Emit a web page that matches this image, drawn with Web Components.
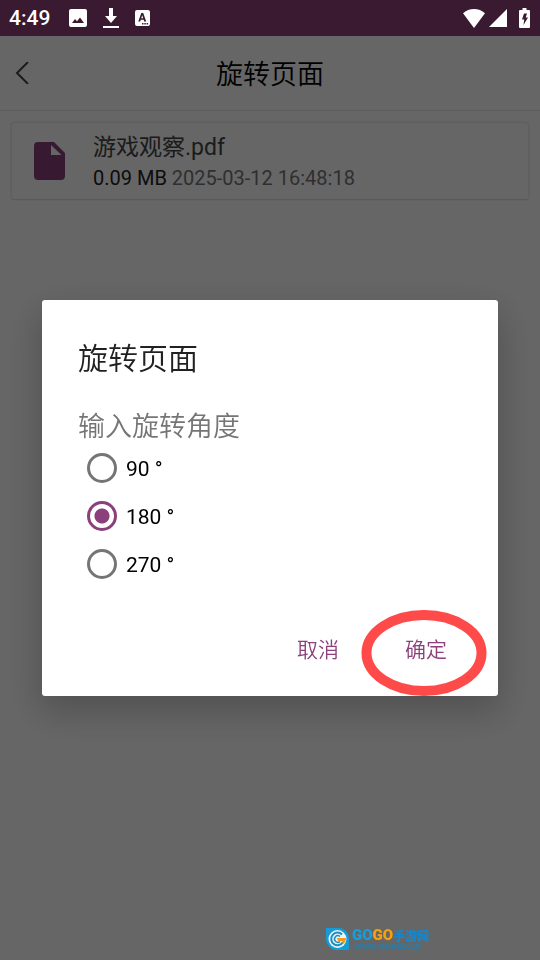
<!DOCTYPE html>
<html lang="zh-CN">
<head>
<meta charset="utf-8">
<meta name="viewport" content="width=device-width, initial-scale=1">
<title>旋转页面</title>
<style>
  html, body { margin: 0; min-height: 100%; }
  body {
    --accent: #8b3f7b;
    font-family: Roboto, "Noto Sans CJK SC", sans-serif;
    background: #fff; color: #000;
  }
</style>
</head>
<body>
<rotate-app>
  <status-bar></status-bar>
  <app-header>旋转页面</app-header>
  <file-card>
    <span slot="name">游戏观察.pdf</span>
    <span slot="size">0.09 MB</span>
    <span slot="date">2025-03-12 16:48:18</span>
  </file-card>
  <modal-dialog slot="overlay">
    <span slot="title">旋转页面</span>
    <angle-picker legend="输入旋转角度" angles="90,180,270" selected="180"></angle-picker>
    <dialog-button slot="actions">取消</dialog-button>
    <dialog-button slot="actions" highlighted>确定</dialog-button>
  </modal-dialog>
  <site-mark slot="mark"></site-mark>
</rotate-app>
<script>
class Base extends HTMLElement {
  connectedCallback() {
    if (!this.shadowRoot) this.attachShadow({ mode: 'open' }).innerHTML = this.view();
  }
}

customElements.define('rotate-app', class extends Base {
  view() { return `
    <style>
      :host { display: flex; flex-direction: column; min-height: 100vh; }
      .mark { position: fixed; left: 50%; bottom: 9px; margin-left: 55px; z-index: 3; }
    </style>
    <slot></slot><slot name="overlay"></slot>
    <div class="mark"><slot name="mark"></slot></div>`; }
});

customElements.define('status-bar', class extends Base {
  view() { return `
    <style>
      :host { display: flex; align-items: center; justify-content: space-between; height: 36px;
        padding: 0 10px 0 9px; background: #3a1a30; color: #fff; position: relative; z-index: 3; }
      div { display: flex; align-items: center; }
      time { font: 500 21px/36px Roboto, sans-serif; margin-right: 19px; }
      .left svg + svg { margin-left: 16px; }
      svg { display: block; fill: #fff; }
      .right { gap: 4px; }
      .right svg:last-child { margin-left: 8px; }
    </style>
    <div class="left">
      <time>4:49</time>
      <svg width="18" height="18" viewBox="0 0 18 18"><path fill-rule="evenodd" d="M2 0h14a2 2 0 0 1 2 2v14a2 2 0 0 1-2 2H2a2 2 0 0 1-2-2V2a2 2 0 0 1 2-2zM3 14h12l-4-5.500-3 3.800-2-2.300z"/></svg>
      <svg width="16" height="20" viewBox="0 0 16 20"><path d="M6 0h4v8h4l-6 7-6-7h4zM0 18h16v2H0z"/></svg>
      <svg width="15" height="16" viewBox="0 0 15 16"><path fill-rule="evenodd" d="M2 0h11a2 2 0 0 1 2 2v12a2 2 0 0 1-2 2H2a2 2 0 0 1-2-2V2a2 2 0 0 1 2-2zM6.300 3h1.900l3 8.500H9.200l-.5-1.700H5.700l-.5 1.700H3.300zM7.200 5.200l-1 3.100h2zM7 13h1.500v1.500H7zM9.300 13h1.500v1.500H9.300zM11.600 13h1.500v1.500h-1.500z"/></svg>
    </div>
    <div class="right">
      <svg width="22" height="19" viewBox="0 0 22 19"><path d="M11 19 0 4.200C3 1.500 7 0 11 0s8 1.500 11 4.200z"/></svg>
      <svg width="18" height="18" viewBox="0 0 18 18"><path d="M18 0v18H0z"/></svg>
      <svg width="11" height="20" viewBox="0 0 11 20"><path fill-rule="evenodd" d="M3.500 0h4v2H10a1 1 0 0 1 1 1v16a1 1 0 0 1-1 1H1a1 1 0 0 1-1-1V3a1 1 0 0 1 1-1h2.500zM5 5.500h3L6.700 9.500H9L4.500 17l.7-5.500H3z"/></svg>
    </div>`; }
});

customElements.define('app-header', class extends Base {
  view() { return `
    <style>
      :host { display: grid; grid-template-columns: 48px 1fr 48px; align-items: center; height: 74px; border-bottom: 1px solid #e8e8e8; }
      button { background: none; border: 0; padding: 0 0 0 15px; height: 48px; display: flex; align-items: center; }
      svg { fill: none; stroke: #444; stroke-width: 2; }
      h1 { margin: 0; padding-top: 4px; font-size: 27px; line-height: 40px; font-weight: 350; text-align: center; }
    </style>
    <button type="button" aria-label="返回"><svg width="14" height="22" viewBox="0 0 14 22"><path d="M13 0 2 11l11 11"/></svg></button>
    <h1><slot></slot></h1>`; }
});

customElements.define('file-card', class extends Base {
  view() { return `
    <style>
      :host { display: flex; align-items: center; gap: 28px; margin: 11px; padding: 8px 22px; height: 60px;
        border-radius: 4px; border: 1px solid #ededed; border-bottom-color: #dedede; box-shadow: 0 0 2px #0002; }
      svg { display: block; flex: none; fill: var(--accent); }
      .name { font-size: 23px; line-height: 34px; color: #444; }
      .meta { font-size: 20px; line-height: 26px; color: #777; }
      .size { color: #222; }
    </style>
    <svg width="31" height="38" viewBox="0 0 31 38"><path fill-rule="evenodd" d="M4 0h16l11 11v23a4 4 0 0 1-4 4H4a4 4 0 0 1-4-4V4a4 4 0 0 1 4-4zM17 3v10h10.500z"/></svg>
    <div>
      <div class="name"><slot name="name"></slot></div>
      <div class="meta"><span class="size"><slot name="size"></slot></span> <slot name="date"></slot></div>
    </div>`; }
});

customElements.define('modal-dialog', class extends Base {
  view() { return `
    <style>
      :host { position: fixed; inset: 0; z-index: 2; display: flex; align-items: center; padding: 36px 42px 0; background: rgba(0,0,0,.6); }
      section { flex: 1; background: #fff; border-radius: 3px; box-shadow: 0 14px 36px 2px rgba(0,0,0,.22); }
      .body { padding: 37px 36px 0; }
      h2 { margin: 0 0 29px; font-size: 30px; line-height: 44px; font-weight: 350; color: #212121; }
      footer { display: flex; justify-content: flex-end; gap: 12px; padding: 36px 24px 24px; }
    </style>
    <section role="dialog" aria-modal="true" aria-labelledby="t">
      <div class="body"><h2 id="t"><slot name="title"></slot></h2><slot></slot></div>
      <footer><slot name="actions"></slot></footer>
    </section>`; }
});

customElements.define('angle-picker', class extends Base {
  view() {
    const rows = this.getAttribute('angles').split(',').map(a => `
      <label for="a${a}"><input type="radio" name="angle" id="a${a}" value="${a}" ${a === this.getAttribute('selected') ? 'checked' : ''}><span>${a} °</span></label>`).join('');
    return `
    <style>
      :host { display: block; }
      fieldset { border: 0; margin: 0; padding: 0; }
      legend { padding: 0; font-size: 27px; line-height: 34px; font-weight: 350; color: #757575; }
      label { display: flex; align-items: center; gap: 9px; height: 48px; padding-left: 9px; font-size: 21px; color: #000; }
      span { padding-top: 2px; }
      input { appearance: none; box-sizing: border-box; margin: 0; width: 30px; height: 30px; border: 3px solid #757575; border-radius: 50%; }
      input:checked { border-color: var(--accent); background: radial-gradient(circle, var(--accent) 7px, transparent 8px); }
    </style>
    <fieldset><legend>${this.getAttribute('legend')}</legend>${rows}</fieldset>`;
  }
});

customElements.define('dialog-button', class extends Base {
  view() { return `
    <style>
      :host { display: block; position: relative; }
      button { border: 0; background: none; height: 48px; padding: 0 27px; font: inherit; font-size: 21px; font-weight: 350; color: var(--accent); }
      svg { position: absolute; left: 50%; top: 50%; margin: -39px 0 0 -65px; pointer-events: none; }
    </style>
    <button type="button"><slot></slot></button>
    ${this.hasAttribute('highlighted') ? '<svg width="126" height="88" viewBox="0 0 126 88" aria-hidden="true"><ellipse cx="63" cy="44" rx="57.500" ry="38" fill="none" stroke="#ff4a4a" stroke-width="10"/></svg>' : ''}`; }
});

customElements.define('site-mark', class extends Base {
  view() { return `
    <style>
      :host { display: flex; align-items: center; gap: 2px; }
      svg { display: block; }
      .row { display: flex; align-items: center; height: 17px; font: 900 15px/17px Roboto, sans-serif; }
      .blue { color: #12a0e0; } .gold { color: #f7a10a; }
      .cn { font: 900 12px/17px "Noto Sans CJK SC", sans-serif; color: #1288d0; }
      small { display: block; font: 700 7px/7px "DejaVu Sans", sans-serif; color: #2f7ba3; padding-left: 2px; }
    </style>
    <svg width="25" height="24" viewBox="0 0 25 24">
      <path d="M1 1h13a10 10 0 0 1 10 10v12H12A11 11 0 0 1 1 12z" fill="#169bd7"/>
      <circle cx="12.500" cy="12" r="9" fill="#e9f5fb"/>
      <path d="M17 7.500A6.300 6.300 0 1 0 18 15" fill="none" stroke="#238ebd" stroke-width="2"/>
      <path d="M15 9.500a3.300 3.300 0 1 0 0 5" fill="none" stroke="#238ebd" stroke-width="1.500"/>
      <path d="M12 11h9c0 3-1 5-3 6l-1-3h-4z" fill="#f59a16"/>
    </svg>
    <div><div class="row"><span class="blue">GO</span><span class="gold">GO</span><span class="cn">手游网</span></div>
    <small>WWW.GO9GO.CN</small></div>`; }
});
</script>
</body>
</html>
